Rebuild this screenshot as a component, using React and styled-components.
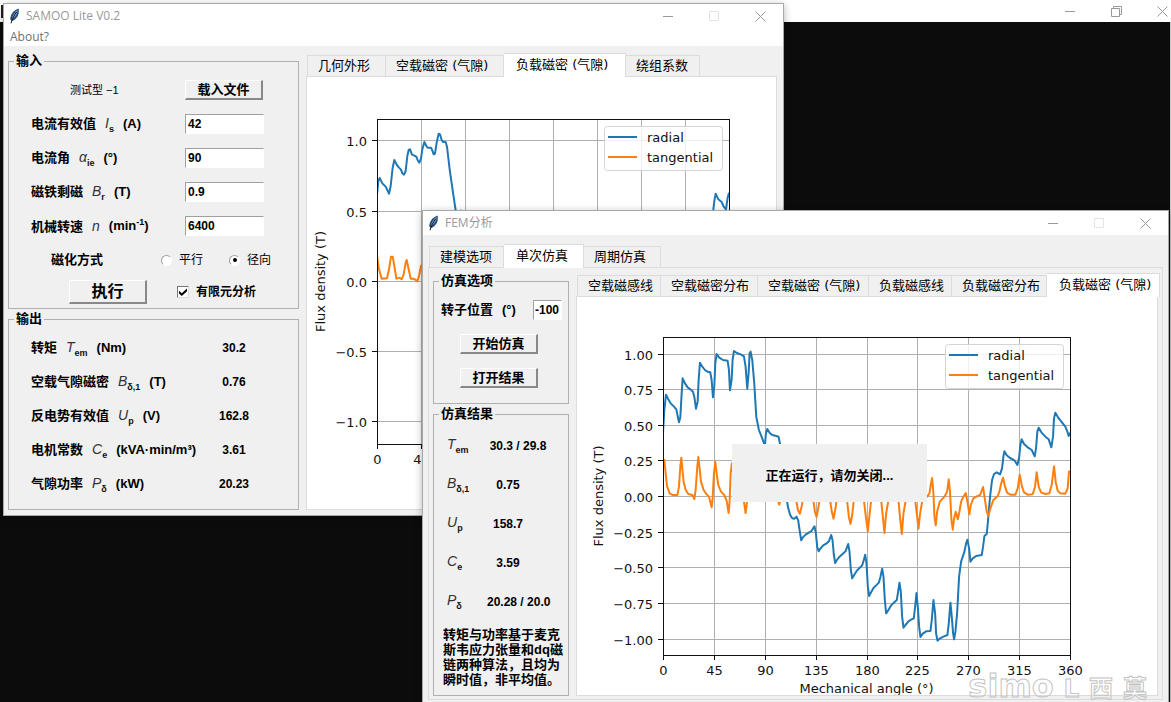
import styled, { createGlobalStyle, css } from "styled-components";

const GlobalStyle = createGlobalStyle`
  * {
    box-sizing: border-box;
  }

  body {
    margin: 0;
    overflow: hidden;
    background: #0c0c0c;
    color: #000;
    font: bold 13px/16px "Liberation Sans", "Noto Sans CJK SC", sans-serif;
  }

  p {
    margin: 0;
  }
`;

/* desktop and windows */

const Desktop = styled.main`
  position: relative;
  display: flex;
  flex-direction: column;
  height: 100vh;
  overflow: hidden;
`;

const ConsoleBar = styled.header`
  display: flex;
  justify-content: space-between;
  height: 22px;
  padding-left: 1px;
  background: #fff;
`;

const ConsoleIcon = styled.span`
  width: 12px;
  height: 13px;
  margin-top: 5px;
  background: #222;
`;

const ConsoleBody = styled.div`
  flex: 1;
  border-right: 1px solid #c8c8c8;
  background: #0c0c0c;
`;

const Window = styled.section`
  position: absolute;
  left: ${({ $left }) => $left}px;
  top: ${({ $top }) => $top}px;
  width: ${({ $width }) => $width}px;
  border: 1px solid #a8a8a8;
  background: #f0f0f0;
  box-shadow: 0 2px 8px rgba(0, 0, 0, 0.3);
`;

const TitleBar = styled.header`
  display: flex;
  align-items: center;
  height: 24px;
  padding-left: 5px;
  background: #fff;
`;

const Title = styled.h1`
  flex: 1;
  margin: 0 0 0 6px;
  color: #999;
  font: normal 12px/16px "Open Sans", "Noto Sans CJK SC", sans-serif;
`;

const Controls = styled.div`
  display: flex;
  height: 100%;
  margin-right: ${({ $shift }) => ($shift ? "-14px" : "0")};
`;

const ControlButton = styled.button`
  display: grid;
  place-items: center;
  width: 46px;
  padding: 0;
  border: 0;
  background: none;
  color: ${({ $faint }) => ($faint ? "#e4e4e4" : "#999")};
`;

const MenuBar = styled.nav`
  height: 18px;
  padding-left: 6px;
  background: #fff;
`;

const MenuLink = styled.a`
  color: #707070;
  font: normal 12px/18px "Open Sans", sans-serif;
  text-decoration: none;
`;

const MainBody = styled.div`
  display: flex;
  gap: 7px;
  padding: 7px 6px 5px 4px;
`;

const FemBody = styled.div`
  padding: 9px 5px 5px;
`;

const SideColumn = styled.div`
  display: flex;
  flex-direction: column;
  flex: none;
  gap: 2px;
  width: ${({ $width }) => $width}px;
`;

/* groups and form parts */

const Group = styled.fieldset`
  min-width: 0;
  margin: 0;
  padding: 0;
  border: 1px solid #b0b0b0;
`;

const Legend = styled.legend`
  margin-left: 5px;
  padding: 0 2px;
  line-height: 16px;
`;

const Rows = styled.div`
  padding: 4px 0 ${({ $bottom }) => $bottom || 0}px ${({ $indent }) => $indent || 0}px;
`;

const Row = styled.div`
  display: grid;
  grid-template-columns: ${({ $columns }) => $columns};
  align-items: center;
  height: ${({ $height }) => $height || 34}px;
`;

const Caption = styled.label`
  display: flex;
  gap: 9px;
  align-items: baseline;
  padding-left: ${({ $indent }) => $indent || 0}px;
  white-space: nowrap;

  sup {
    font-size: 9px;
    line-height: 9px;
  }
`;

const Symbol = styled.i`
  color: #333;
  font-weight: normal;
  font-size: 14px;

  sub {
    color: #111;
    font: bold 9px/9px "Liberation Sans", sans-serif;
    vertical-align: -4px;
  }
`;

const Output = styled.output`
  min-width: ${({ $wide }) => ($wide ? 62 : 42)}px;
  font-size: 12px;
  text-align: center;
  white-space: nowrap;
`;

const FileName = styled.span`
  padding-left: 39px;
  font-weight: normal;
  font-size: 11px;
`;

const sunken = css`
  border: 1px solid;
  border-color: #a0a0a0 #fff #fff #a0a0a0;
  background: #fff;
`;

const TextBox = styled.input`
  ${sunken}
  width: 100%;
  height: 20px;
  padding: 0 ${({ $tight }) => ($tight ? 1 : 2)}px;
  font: inherit;
  font-size: 12px;
`;

const PushButton = styled.button`
  width: 78px;
  height: ${({ $large }) => ($large ? 24 : 20)}px;
  padding: 0;
  border: 1px solid;
  border-width: 1px 2px 2px 1px;
  border-color: #fff #888 #888 #fff;
  background: #f0f0f0;
  color: #000;
  font: inherit;
  font-size: ${({ $large }) => ($large ? 16 : 13)}px;
  line-height: 16px;
`;

const Choice = styled.label`
  display: flex;
  align-items: center;
  gap: 7px;
  font-weight: ${({ $bold }) => ($bold ? "bold" : "normal")};
  font-size: 12px;
  white-space: nowrap;
`;

const Radio = styled.input`
  ${sunken}
  display: grid;
  place-items: center;
  width: 11px;
  height: 11px;
  margin: 0;
  border-radius: 50%;
  appearance: none;

  &:checked::before {
    width: 4px;
    height: 4px;
    border-radius: 50%;
    background: #000;
    content: "";
  }
`;

const Check = styled.input`
  ${sunken}
  display: grid;
  place-items: center;
  width: 12px;
  height: 12px;
  margin: 0;
  border-color: #777 #ddd #ddd #777;
  appearance: none;

  &:checked::before {
    width: 8px;
    height: 8px;
    background: #000;
    clip-path: polygon(0 35%, 35% 65%, 100% 5%, 100% 40%, 35% 100%, 0 70%);
    content: "";
  }
`;

const ButtonRow = styled.div`
  display: flex;
  align-items: center;
  justify-content: center;
  height: 34px;
  padding-right: 4px;
`;

const Note = styled.p`
  width: 122px;
  margin: 6px 0 8px 9px;
  line-height: 15px;
`;

/* notebooks */

const Notebook = styled.div`
  display: flex;
  flex: 1;
  flex-direction: column;
  min-width: 0;
`;

const TabStrip = styled.div`
  display: flex;
  align-items: flex-end;
  height: 23px;
  padding-left: 1px;
`;

const Tab = styled.button`
  position: relative;
  z-index: ${({ $active }) => ($active ? 1 : 0)};
  flex: none;
  width: ${({ $width }) => $width}px;
  height: ${({ $active }) => ($active ? 24 : 21)}px;
  margin-bottom: ${({ $active }) => ($active ? -1 : 0)}px;
  padding: 0 0 ${({ $active }) => ($active ? "2px 12px" : "0 10px")};
  border: 1px solid #dcdcdc;
  border-bottom: 0;
  border-left-width: ${({ $first }) => ($first ? 1 : 0)}px;
  background: ${({ $active }) => ($active ? "#fff" : "#f0f0f0")};
  color: #000;
  font: normal 13px/16px "DejaVu Sans", "Noto Sans CJK SC", sans-serif;
  text-align: left;
  white-space: nowrap;
`;

const Panel = styled.div`
  flex: 1;
  min-height: 0;
  border: 1px solid #dcdcdc;
  background: ${({ $plain }) => ($plain ? "#f0f0f0" : "#fff")};
`;

const FemLayout = styled.div`
  display: flex;
  gap: 7px;
  padding: 5px 4px 3px 4px;
`;

const ChartSvg = styled.svg`
  display: block;
  width: 100%;
  height: ${({ $height }) => $height}px;
  font: normal 13px "DejaVu Sans", sans-serif;
  fill: #111;
`;

const Popup = styled.div`
  position: absolute;
  left: 732px;
  top: 444px;
  display: grid;
  place-items: center;
  width: 195px;
  height: 58px;
  padding-top: 6px;
  background: #f0f0f0;
`;

const Watermark = styled.div`
  position: absolute;
  right: 24px;
  bottom: 7px;
  display: flex;
  align-items: baseline;
  gap: 10px;
  height: 18px;
  color: transparent;
  font: bold 32px/18px "DejaVu Sans", sans-serif;
  -webkit-text-stroke: 1px #c4c4c4;
`;

const WatermarkPart = styled.span`
  font-size: 24px;
  font-family: "DejaVu Sans", "Noto Sans CJK SC", sans-serif;
`;

const FeatherIcon = () => (
  <svg width="11" height="16" viewBox="0 0 11 16" aria-hidden="true">
    <path d="M9.6.4C5 2 1.400 6 1.200 11.400L3.600 13C7.900 10.500 10.700 6.500 9.600.4Z" fill="#24486f" />
    <path d="M8.800 1.800C5.500 4 3.200 7.500 2.800 11.400C6.500 9 8.700 5.800 8.800 1.800Z" fill="#6fa5dc" />
    <path d="M7.600 4C5.500 6.800 3.300 10.200 2 15.300" fill="none" stroke="#111" strokeWidth="1" />
  </svg>
);

const WindowControls = ({ restored, shift }) => (
  <Controls $shift={shift}>
    <ControlButton aria-label="Minimize">
      <svg width="11" height="11"><path d="M0 5.500H10" stroke="currentColor" /></svg>
    </ControlButton>
    <ControlButton aria-label="Maximize" $faint={!restored}>
      <svg width="11" height="11" fill="none" stroke="currentColor">
        {restored ? <path d="M.5 2.500H8.500V10.500H.5ZM2.500 2.500V.5H10.500V8.500H8.500" /> : <path d="M.5.5H9.500V9.500H.5Z" />}
      </svg>
    </ControlButton>
    <ControlButton aria-label="Close">
      <svg width="11" height="11"><path d="M.5.5L10.500 10.500M10.500.5L.5 10.500" stroke="currentColor" /></svg>
    </ControlButton>
  </Controls>
);

const Tabs = ({ items, active }) => (
  <TabStrip role="tablist">
    {items.map(([label, width], index) => (
      <Tab
        key={label}
        role="tab"
        aria-selected={index === active}
        $active={index === active}
        $first={index === 0}
        $width={width}
      >
        {label}
      </Tab>
    ))}
  </TabStrip>
);

const Quantity = ({ name, symbol, sub, unit, htmlFor }) => (
  <Caption as={htmlFor ? "label" : "span"} htmlFor={htmlFor}>
    {name && <span>{name}</span>}
    {symbol && (
      <Symbol>
        {symbol}
        {sub && <sub>{sub}</sub>}
      </Symbol>
    )}
    {unit && <span>{unit}</span>}
  </Caption>
);

const BLUE = "#1f77b4";
const ORANGE = "#ff7f0e";

// Traces are kept at three units per pixel, viewBox gives their own frame.
const Chart = ({ height, plot, yRange, yTicks, decimals, xLabel, labelGap, viewBox, radial, tangential }) => {
  const { x, y, w, h } = plot;
  const right = x + w;
  const bottom = y + h;
  const toY = (value) => Math.round(y + ((yRange[1] - value) / (yRange[1] - yRange[0])) * h) + 0.5;
  const toX = (deg) => Math.round(x + (deg / 360) * w) + 0.5;
  const degrees = [0, 45, 90, 135, 180, 225, 270, 315, 360];
  const box = { x: right - 125, y: y + 7 };

  return (
    <ChartSvg $height={height} role="img" aria-label="Flux density">
      {degrees.map((deg) => (
        <g key={deg}>
          <path d={`M${toX(deg)} ${y}V${bottom}`} stroke="#b0b0b0" />
          <path d={`M${toX(deg)} ${bottom}v5`} stroke="#111" />
          <text x={toX(deg)} y={bottom + 20} textAnchor="middle">{deg}</text>
        </g>
      ))}
      {yTicks.map((value) => (
        <g key={value}>
          <path d={`M${x} ${toY(value)}H${right}`} stroke="#b0b0b0" />
          <path d={`M${x} ${toY(value)}h-5`} stroke="#111" />
          <text x={x - 10} y={toY(value) + 5} textAnchor="end">
            {value.toFixed(decimals).replace("-", "\u2212")}
          </text>
        </g>
      ))}
      <svg x={x} y={y} width={w} height={h} viewBox={viewBox} preserveAspectRatio="none">
        <g fill="none" strokeWidth="6" strokeLinejoin="round">
          <polyline points={radial} stroke={BLUE} />
          <polyline points={tangential} stroke={ORANGE} />
        </g>
      </svg>
      <rect x={x + 0.5} y={y + 0.5} width={w} height={h} fill="none" stroke="#111" />
      <text transform={`translate(${x - labelGap} ${y + h / 2}) rotate(-90)`} textAnchor="middle">
        Flux density (T)
      </text>
      {xLabel && <text x={x + w / 2} y={bottom + 38} textAnchor="middle">{xLabel}</text>}
      <rect x={box.x + 0.5} y={box.y + 0.5} width="118" height="44" rx="3" fill="#fff" fillOpacity="0.8" stroke="#d4d4d4" />
      <path d={`M${box.x + 4} ${box.y + 11}h29`} stroke={BLUE} strokeWidth="2" />
      <path d={`M${box.x + 4} ${box.y + 31}h29`} stroke={ORANGE} strokeWidth="2" />
      <text x={box.x + 43} y={box.y + 16}>radial</text>
      <text x={box.x + 43} y={box.y + 36}>tangential</text>
    </ChartSvg>
  );
};

const analyticRadial = `232,585 236,545 240,536 248,552 258,562 268,583 273,560 279,505 284,482 291,496
  298,505 304,511 308,522 313,526 318,515 323,470 327,452 331,450 337,466 344,469 350,472 355,485 359,490
  364,478 368,450 374,428 380,440 384,445 394,445 399,456 402,465 406,463 411,430 417,403 421,405 426,422
  430,428 438,428 442,442 450,510 460,580 468,633 476,640 484,634 500,760 700,1250 900,1200 1100,1000
  1240,640 1244,605 1248,583 1256,600 1266,608 1272,622 1279,630 1284,595 1288,580`;

const analyticTangential = `232,768 238,810 246,838 262,837 268,810 274,772 279,772 284,800 290,838 300,835
  306,840 312,825 318,790 321,782 326,805 333,838 343,838 353,846 358,830 364,800 369,795`;

const femRadial = `40,308 44,240 49,194 55,206 63,220 73,230 80,238 84,258 88,277 92,262 96,190 99,145
  106,160 114,172 122,178 130,185 134,200 139,236 144,215 147,150 151,98 158,110 166,120 174,125 182,127
  186,150 190,202 194,170 197,100 201,72 208,82 220,90 234,92 238,120 241,181 246,150 249,90 253,63 262,69
  275,74 283,79 288,110 293,176 297,130 300,70 303,65 308,90 314,160 320,260 328,300 338,325 346,348
  349,310 353,297 360,308 368,315 380,318 387,320 392,345 400,430 410,500 416,535 422,555 428,565 434,566
  441,560 446,572 450,600 455,631 460,622 468,614 478,608 486,603 490,596 495,589 499,610 503,650 507,664
  513,655 521,646 530,641 538,634 545,615 549,630 553,675 557,699 562,690 570,680 580,671 588,664 596,642
  600,665 604,720 608,745 614,735 622,722 630,714 638,706 643,690 647,674 651,700 655,770 659,798 664,788
  672,774 680,766 688,758 693,740 698,716 702,740 706,810 710,850 717,840 725,826 733,818 742,810 746,785
  750,758 754,785 758,860 762,893 768,885 777,874 785,869 793,865 797,830 801,789 805,830 809,890 813,921
  820,911 830,904 843,903 847,870 852,810 857,850 860,910 864,932 872,925 882,920 894,915 898,880 903,818
  907,860 911,910 914,928 918,905 923,850 929,740 935,695 945,665 950,640 954,629 959,655 963,695 970,685
  980,678 997,675 1001,650 1005,618 1012,612 1016,570 1022,500 1028,450 1034,432 1042,427 1052,433
  1058,415 1062,380 1065,364 1072,376 1082,384 1095,391 1104,405 1109,385 1113,345 1117,328 1124,342
  1135,352 1147,360 1156,379 1160,355 1164,305 1168,293 1176,307 1188,320 1198,328 1206,352 1211,320
  1214,265 1218,248 1226,262 1236,275 1248,290 1254,305 1258,318 1262,308`;

const femTangential = `40,410 44,390 48,430 52,468 60,490 70,495 83,495 88,470 92,410 95,383 98,415 102,455
  108,480 116,492 128,495 134,507 138,480 143,410 146,381 150,415 154,455 162,480 170,492 178,500 182,515
  186,532 189,505 193,430 197,395 201,430 206,465 214,485 224,495 231,512 237,549 240,515 243,430 247,400
  252,440 260,480 275,500 283,515 288,549 293,510 298,420 310,480 340,500 375,500 384,508 389,524 394,505
  410,490 430,490 440,510 445,540 451,551 456,530 462,500 480,485 490,500 496,545 501,561 506,535 512,500
  530,485 540,500 546,540 552,566 557,540 563,500 582,485 592,505 598,560 603,582 608,555 613,510 630,485
  642,500 649,560 655,604 660,555 665,510 680,485 694,500 700,560 705,609 710,550 717,510 732,480
  746,500 752,565 757,612 762,550 769,510 785,480 796,500 802,550 807,596 812,550 818,515 833,500 840,490
  844,465 848,444 852,490 855,560 859,586 863,545 871,515 885,500 893,485 898,448 902,490 906,570 910,599
  914,565 919,545 925,568 930,545 935,515 942,500 949,489 954,515 960,553 964,525 972,505 982,499 992,495
  1001,471 1006,505 1012,545 1017,558 1023,535 1032,510 1045,498 1050,485 1055,462 1061,443 1067,470
  1073,488 1083,494 1098,494 1105,475 1111,434 1118,470 1124,487 1135,494 1150,493 1157,470 1162,427
  1168,470 1175,487 1188,492 1200,490 1207,465 1214,409 1219,455 1225,482 1233,490 1248,491 1255,475
  1259,425 1262,423`;

const inputs = [
  { id: "current", name: "电流有效值", symbol: "I", sub: "s", unit: "(A)", value: "42" },
  { id: "angle", name: "电流角", symbol: "α", sub: "ie", unit: "(°)", value: "90" },
  { id: "remanence", name: "磁铁剩磁", symbol: "B", sub: "r", unit: "(T)", value: "0.9" },
  { id: "speed", name: "机械转速", symbol: "n", unit: <>(min<sup>-1</sup>)</>, value: "6400" },
];

const outputs = [
  { name: "转矩", symbol: "T", sub: "em", unit: "(Nm)", value: "30.2" },
  { name: "空载气隙磁密", symbol: "B", sub: "δ,1", unit: "(T)", value: "0.76" },
  { name: "反电势有效值", symbol: "U", sub: "p", unit: "(V)", value: "162.8" },
  { name: "电机常数", symbol: "C", sub: "e", unit: "(kVA·min/m³)", value: "3.61" },
  { name: "气隙功率", symbol: "P", sub: "δ", unit: "(kW)", value: "20.23" },
];

const femResults = [
  { symbol: "T", sub: "em", value: "30.3 / 29.8", wide: true },
  { symbol: "B", sub: "δ,1", value: "0.75" },
  { symbol: "U", sub: "p", value: "158.7" },
  { symbol: "C", sub: "e", value: "3.59" },
  { symbol: "P", sub: "δ", value: "20.28 / 20.0", wide: true },
];

const MainWindow = () => (
  <Window $left={3} $top={3} $width={781}>
    <TitleBar>
      <FeatherIcon />
      <Title>SAMOO Lite V0.2</Title>
      <WindowControls />
    </TitleBar>
    <MenuBar>
      <MenuLink href="#about">About?</MenuLink>
    </MenuBar>
    <MainBody>
      <SideColumn $width={291}>
        <Group>
          <Legend>输入</Legend>
          <Rows $indent={22} $bottom={1}>
            <Row $columns="154px 79px">
              <FileName>测试型 −1</FileName>
              <PushButton>载入文件</PushButton>
            </Row>
            {inputs.map(({ id, value, ...quantity }) => (
              <Row key={id} $columns="154px 79px">
                <Quantity htmlFor={id} {...quantity} />
                <TextBox id={id} defaultValue={value} />
              </Row>
            ))}
            <Row $columns="130px 68px auto">
              <Caption as="span" $indent={20}>磁化方式</Caption>
              <Choice>
                <Radio type="radio" name="magnetization" />
                平行
              </Choice>
              <Choice>
                <Radio type="radio" name="magnetization" defaultChecked />
                径向
              </Choice>
            </Row>
            <Row $columns="38px 108px auto" $height={30}>
              <span />
              <PushButton $large>执行</PushButton>
              <Choice $bold>
                <Check type="checkbox" defaultChecked />
                有限元分析
              </Choice>
            </Row>
          </Rows>
        </Group>
        <Group>
          <Legend>输出</Legend>
          <Rows $indent={22} $bottom={8}>
            {outputs.map(({ value, ...quantity }) => (
              <Row key={quantity.name} $columns="164px 78px">
                <Quantity {...quantity} />
                <Output>{value}</Output>
              </Row>
            ))}
          </Rows>
        </Group>
      </SideColumn>
      <Notebook>
        <Tabs
          active={2}
          items={[["几何外形", 79], ["空载磁密 (气隙)", 118], ["负载磁密 (气隙)", 122], ["绕组系数", 74]]}
        />
        <Panel>
          <Chart
            height={432}
            plot={{ x: 70, y: 42, w: 352, h: 325 }}
            yRange={[-1.163, 1.152]}
            yTicks={[-1, -0.5, 0, 0.5, 1]}
            decimals={1}
            labelGap={52}
            viewBox="232 359 1056 975"
            radial={analyticRadial}
            tangential={analyticTangential}
          />
        </Panel>
      </Notebook>
    </MainBody>
  </Window>
);

const FemWindow = () => (
  <Window $left={422} $top={210} $width={747}>
    <TitleBar>
      <FeatherIcon />
      <Title>FEM分析</Title>
      <WindowControls />
    </TitleBar>
    <FemBody>
      <Tabs active={1} items={[["建模选项", 75], ["单次仿真", 80], ["周期仿真", 77]]} />
      <Panel $plain>
        <FemLayout>
          <SideColumn $width={136}>
            <Group>
              <Legend>仿真选项</Legend>
              <Rows $bottom={8}>
                <Row $columns="99px 29px">
                  <Caption htmlFor="rotor" $indent={7}>
                    <span>转子位置</span>
                    <span>(°)</span>
                  </Caption>
                  <TextBox id="rotor" defaultValue="-100" $tight />
                </Row>
                <ButtonRow>
                  <PushButton>开始仿真</PushButton>
                </ButtonRow>
                <ButtonRow>
                  <PushButton>打开结果</PushButton>
                </ButtonRow>
              </Rows>
            </Group>
            <Group>
              <Legend>仿真结果</Legend>
              <Rows $indent={13}>
                {femResults.map(({ value, wide, ...quantity }) => (
                  <Row key={quantity.symbol} $columns="40px max-content" $height={39}>
                    <Quantity {...quantity} />
                    <Output $wide={wide}>{value}</Output>
                  </Row>
                ))}
              </Rows>
              <Note>转矩与功率基于麦克斯韦应力张量和dq磁链两种算法，且均为瞬时值，非平均值。</Note>
            </Group>
          </SideColumn>
          <Notebook>
            <Tabs
              active={5}
              items={[
                ["空载磁感线", 84],
                ["空载磁密分布", 97],
                ["空载磁密 (气隙)", 111],
                ["负载磁感线", 83],
                ["负载磁密分布", 95],
                ["负载磁密 (气隙)", 113],
              ]}
            />
            <Panel>
              <Chart
                height={398}
                plot={{ x: 86, y: 40, w: 407, h: 318 }}
                yRange={[-1.114, 1.116]}
                yTicks={[-1, -0.75, -0.5, -0.25, 0, 0.25, 0.5, 0.75, 1]}
                decimals={2}
                xLabel="Mechanical angle (°)"
                labelGap={60}
                viewBox="40 21 1222 954"
                radial={femRadial}
                tangential={femTangential}
              />
            </Panel>
          </Notebook>
        </FemLayout>
      </Panel>
    </FemBody>
  </Window>
);

const App = () => (
  <Desktop>
    <GlobalStyle />
    <ConsoleBar>
      <ConsoleIcon />
      <WindowControls restored shift />
    </ConsoleBar>
    <ConsoleBody />
    <MainWindow />
    <FemWindow />
    <Popup role="status">正在运行，请勿关闭...</Popup>
    <Watermark aria-hidden="true">
      <span>simo</span>
      <WatermarkPart>L</WatermarkPart>
      <WatermarkPart>西</WatermarkPart>
      <WatermarkPart>莫</WatermarkPart>
    </Watermark>
  </Desktop>
);

export default App;
